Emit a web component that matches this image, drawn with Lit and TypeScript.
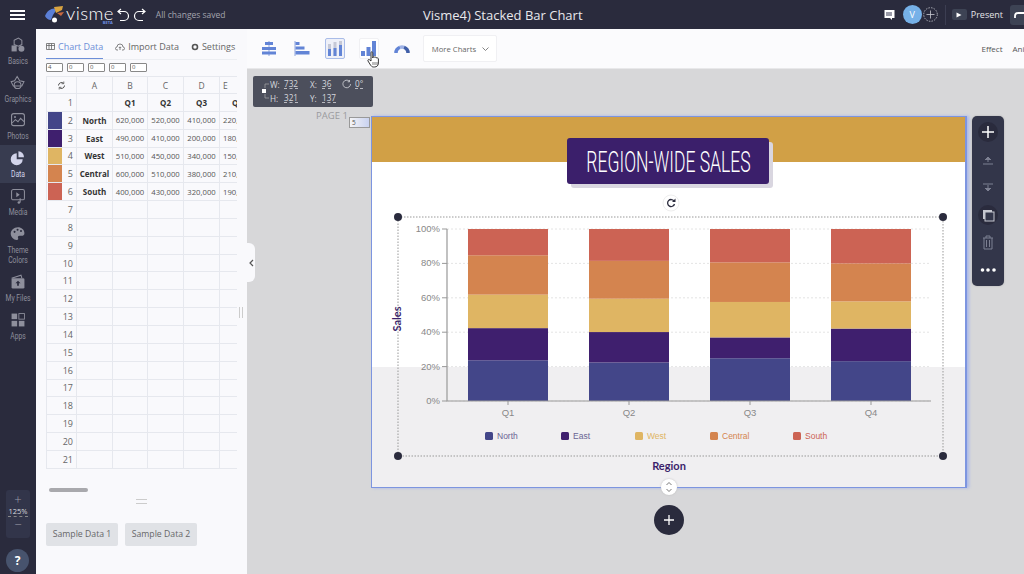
import { LitElement, html, svg, css } from 'lit';
import { customElement } from 'lit/decorators.js';

const SERIES = [
  { name: 'North', color: '#434689', values: [620, 520, 410, 220] },
  { name: 'East', color: '#3f1f6e', values: [490, 410, 200, 180] },
  { name: 'West', color: '#dfb563', values: [510, 450, 340, 150] },
  { name: 'Central', color: '#d4844f', values: [600, 510, 380, 210] },
  { name: 'South', color: '#cc6354', values: [400, 430, 320, 190] },
];
const QUARTERS = ['Q1', 'Q2', 'Q3', 'Q4'];
const ROW_COUNT = 21;

const railIcons: Record<string, unknown> = {
  Basics: svg`<path d="M6 5l5-2.5 4 2.500v5l-4 2-5-2z" fill="none" stroke="currentColor" stroke-width="1.2"/><path d="M3 11h6v7H3z" fill="currentColor"/><circle cx="14.5" cy="15" r="3.5" fill="currentColor"/>`,
  Graphics: svg`<path d="M9.5 3l3 5 5 1-2.5 5H5L2.500 9l4-1z" fill="none" stroke="currentColor" stroke-width="1.2"/><circle cx="10" cy="13" r="4" fill="none" stroke="currentColor" stroke-width="1.2"/>`,
  Photos: svg`<rect x="3" y="3" width="15" height="14" rx="2.500" fill="none" stroke="currentColor" stroke-width="1.3"/><path d="M3.500 14l4-4 3 2.500 3-4 4 4" fill="none" stroke="currentColor" stroke-width="1.2"/><circle cx="7" cy="7" r="1.200" fill="currentColor"/>`,
  Data: svg`<path d="M9 5a7 7 0 1 0 7 7H9z" fill="currentColor"/><path d="M11 2.500a7 7 0 0 1 6.500 7H11z" fill="currentColor"/>`,
  Media: svg`<rect x="3" y="3" width="15" height="12" rx="2" fill="none" stroke="currentColor" stroke-width="1.2"/><path d="M8.500 6l4 3-4 3z" fill="currentColor"/><path d="M13 13v5" stroke="currentColor" stroke-width="1.300"/><circle cx="11.500" cy="18" r="1.500" fill="currentColor"/>`,
  'Theme Colors': svg`<path d="M10.500 2.500c-5 0-8.500 3.500-8.500 7.500s3.500 7.500 7 7.500c2 0 2-1.500 1.500-2.500s0-2.500 2-2.500h2c2 0 3.500-1 3.500-3 0-4-3.500-7-7.500-7z" fill="currentColor"/><circle cx="6.500" cy="8" r="1.200" fill="#2a2b3d"/><circle cx="10" cy="5.500" r="1.200" fill="#2a2b3d"/><circle cx="14" cy="7" r="1.200" fill="#2a2b3d"/>`,
  'My Files': svg`<path d="M3 6l11-3.500 1 3.500" fill="none" stroke="currentColor" stroke-width="1.200"/><rect x="3" y="6" width="15" height="12" rx="1.500" fill="currentColor"/><path d="M10.500 9l3 3h-2v3h-2v-3h-2z" fill="#2a2b3d"/>`,
  Apps: svg`<rect x="3" y="3" width="6.500" height="6.500" fill="currentColor"/><rect x="11.500" y="3" width="6.500" height="6.500" fill="none" stroke="currentColor"/><rect x="3" y="11.500" width="6.500" height="6.500" fill="currentColor"/><rect x="11.500" y="11.500" width="6.500" height="6.500" fill="currentColor"/>`,
};
const RAIL_ITEMS = ['Basics', 'Graphics', 'Photos', 'Data', 'Media', 'Theme Colors', 'My Files', 'Apps'];

@customElement('app-root')
export class AppRoot extends LitElement {
  static styles = css`
    :host {
      display: block;
      width: 1024px;
      height: 574px;
      overflow: hidden;
      font-family: 'Open Sans', 'Noto Sans', sans-serif;
      color: #444;
    }
    .topbar {
      height: 29px;
      background: #2a2b3d;
      color: #fff;
      display: flex;
      align-items: center;
      overflow: hidden;
    }
    .top-left {
      flex: none;
      width: 423px;
      display: flex;
      align-items: center;
    }
    .burger {
      margin-left: 10px;
      width: 15px;
      height: 10px;
      border-top: 2px solid #fff;
      border-bottom: 2px solid #fff;
      box-sizing: border-box;
      position: relative;
    }
    .burger::after {
      content: '';
      position: absolute;
      left: 0;
      right: 0;
      top: 2px;
      height: 2px;
      background: #fff;
    }
    .logo {
      margin-left: 20px;
      display: flex;
      align-items: center;
      position: relative;
    }
    .logo-word {
      font-family: 'Lato', sans-serif;
      font-weight: 300;
      font-size: 18.5px;
      line-height: 14px;
      letter-spacing: 0.4px;
      margin-left: 1px;
      margin-bottom: 4px;
    }
    .beta {
      position: absolute;
      right: 1px;
      top: 14px;
      font-size: 4px;
      font-weight: 700;
      color: #6f8fe0;
      line-height: 5px;
    }
    .history {
      margin-left: 2px;
      display: flex;
      gap: 1px;
    }
    .saved {
      margin-left: 9px;
      font-size: 8.5px;
      color: #a3a4ae;
    }
    .doc-title {
      font-size: 13px;
      color: #e8e8ec;
      white-space: nowrap;
    }
    .top-right {
      margin-left: auto;
      display: flex;
      align-items: center;
      flex: none;
    }
    .avatar {
      margin-left: 8px;
      width: 19px;
      height: 19px;
      border-radius: 50%;
      background: #76b1e8;
      font-size: 9px;
      display: flex;
      align-items: center;
      justify-content: center;
    }
    .invite {
      margin-left: 1px;
    }
    .sep {
      width: 1px;
      height: 20px;
      background: #3c3e52;
      margin-left: 7px;
    }
    .present-box {
      margin-left: 6px;
      width: 15px;
      height: 11px;
      background: #3d4354;
      border-radius: 2px;
      display: flex;
      align-items: center;
      justify-content: center;
    }
    .present-label {
      margin-left: 4px;
      font-size: 9px;
      color: #e4e4e8;
    }
    .share {
      margin-left: 7px;
      width: 14px;
      height: 20px;
      background: #3d4354;
      border-radius: 3px 0 0 3px;
      display: flex;
      align-items: center;
      justify-content: flex-end;
    }
    .body {
      display: flex;
      height: 545px;
    }
    .rail {
      flex: none;
      width: 36px;
      background: #2a2b3d;
      color: #8e8f9c;
      display: flex;
      flex-direction: column;
      align-items: stretch;
      padding-top: 3px;
      box-sizing: border-box;
    }
    .rail-item {
      height: 37.7px;
      display: flex;
      flex-direction: column;
      align-items: center;
      justify-content: center;
      font-family: 'Roboto', sans-serif;
      font-size: 8.5px;
      line-height: 10px;
      text-align: center;
    }
    .rail-item span {
      display: block;
      width: 44px;
      transform: scaleX(0.8);
    }
    .rail-item.active {
      background: #383c50;
      color: #d2d4ea;
    }
    .rail-item.tall {
      height: 49px;
    }
    .rail-item svg {
      margin-bottom: 2px;
      flex: none;
    }
    .zoom {
      margin: auto 0 0 6px;
      padding-top: 2px;
      width: 24px;
      height: 48px;
      box-sizing: border-box;
      background: #32354a;
      border-radius: 3px;
      color: #9a9ba8;
      display: flex;
      flex-direction: column;
      align-items: center;
      font-size: 7.5px;
    }
    .zoom-sign {
      font-size: 13px;
      line-height: 15px;
      font-weight: 300;
    }
    .zoom-pct {
      color: #d8d8de;
      line-height: 9px;
      border-bottom: 1px dashed #888;
    }
    .help {
      margin: 11px 0 2px 6px;
      width: 23px;
      height: 23px;
      flex: none;
      border-radius: 50%;
      background: #47536d;
      color: #fff;
      font-weight: 700;
      font-size: 12px;
      display: flex;
      align-items: center;
      justify-content: center;
    }
    .panel {
      flex: none;
      width: 211px;
      box-sizing: border-box;
      background: #f9f9fc;
      padding-left: 10px;
      position: relative;
    }
    .tabs {
      height: 31px;
      width: 191px;
      display: flex;
      align-items: flex-end;
      gap: 12px;
      border-bottom: 1px solid #eceef2;
      box-sizing: border-box;
      font-size: 9px;
      white-space: nowrap;
      color: #666;
    }
    .tab {
      display: flex;
      align-items: center;
      gap: 3px;
      height: 25px;
      box-sizing: border-box;
      flex: none;
    }
    .tab.active {
      color: #6d8fd8;
      border-bottom: 1px solid #6d8fd8;
    }
    .tab svg {
      flex: none;
    }
    .mini-inputs {
      display: flex;
      gap: 4px;
      margin-top: 3px;
      height: 10px;
    }
    .mini-inputs span {
      width: 17px;
      height: 9px;
      box-sizing: border-box;
      border: 1px solid #888;
      border-radius: 1px;
      background: #fff;
      font-size: 6px;
      line-height: 7px;
      padding-left: 1px;
      color: #555;
    }
    .sheet {
      margin-top: 3px;
      width: 191px;
      overflow: hidden;
    }
    .grid {
      width: 209px;
      display: grid;
      grid-template-columns: 30px 36px 35px 36px 36px 36px;
      grid-template-rows: 17px;
      grid-auto-rows: 17.85px;
      border-top: 1px solid #e6e8ee;
      border-left: 1px solid #e6e8ee;
      box-sizing: border-box;
    }
    .cell {
      border-right: 1px solid #e6e8ee;
      border-bottom: 1px solid #e6e8ee;
      box-sizing: border-box;
      display: flex;
      align-items: center;
      justify-content: center;
      font-size: 7.7px;
      color: #555;
      white-space: nowrap;
      overflow: hidden;
    }
    .cell.bold {
      font-weight: 700;
      color: #333;
      font-size: 8px;
    }
    .cell.head {
      font-size: 8.5px;
      color: #666;
    }
    .cell.num {
      justify-content: flex-end;
      padding-right: 3px;
      font-size: 9px;
      color: #666;
    }
    .cell.clip {
      justify-content: flex-start;
      padding-left: 3px;
    }
    .swatch {
      width: 14px;
      height: 100%;
      margin-right: auto;
      margin-left: 1px;
    }
    .scroll-thumb {
      margin: 19px 0 0 3px;
      width: 39px;
      height: 4px;
      border-radius: 2px;
      background: #a9a9ad;
    }
    .grip {
      margin: 7px 0 0 90px;
      width: 11px;
      height: 5px;
      border-top: 1px solid #ccc;
      border-bottom: 1px solid #ccc;
      box-sizing: border-box;
    }
    .samples {
      margin-top: 19px;
      display: flex;
      gap: 7px;
    }
    .sample {
      width: 72px;
      height: 23px;
      background: #e0e2e6;
      border-radius: 2px;
      display: flex;
      align-items: center;
      justify-content: center;
      font-size: 8.7px;
      color: #666;
    }
    .vgrip {
      position: absolute;
      left: 203px;
      top: 278px;
      width: 4px;
      height: 11px;
      border-left: 1px solid #ccc;
      border-right: 1px solid #ccc;
      box-sizing: border-box;
    }
    .main {
      flex: 1;
      min-width: 0;
      display: flex;
      flex-direction: column;
    }
    .toolbar {
      height: 40px;
      flex: none;
      background: #fbfbfd;
      display: flex;
      align-items: center;
      padding-left: 5px;
      position: relative;
      overflow: hidden;
      border-bottom: 1px solid #e8e8ea;
      box-sizing: border-box;
    }
    .tool {
      flex: none;
      width: 33.3px;
      height: 27px;
      display: flex;
      align-items: center;
      justify-content: center;
    }
    .tool-box {
      width: 20px;
      height: 21px;
      box-sizing: border-box;
      border-radius: 2px;
      display: flex;
      align-items: center;
      justify-content: center;
    }
    .tool-box.on {
      border: 1px solid #a9bce8;
      background: #eef0f8;
    }
    .tool-box.hover {
      border: 1px solid #f0f0f3;
      background: #fff;
    }
    .more {
      flex: none;
      margin-left: 5px;
      width: 74px;
      height: 27px;
      box-sizing: border-box;
      border: 1px solid #f0f0f3;
      border-radius: 2px;
      background: #fff;
      display: flex;
      align-items: center;
      justify-content: center;
      gap: 6px;
      font-size: 7.7px;
      color: #666;
    }
    .tool-text {
      flex: none;
      font-size: 8px;
      color: #555;
      margin-left: 10px;
      white-space: nowrap;
    }
    .tool-text.first {
      margin-left: 484px;
    }
    .cursor {
      position: absolute;
      left: 120px;
      top: 22px;
    }
    .canvas {
      flex: 1;
      background: #d7d7d9;
      position: relative;
      overflow: hidden;
    }
    .collapse {
      position: absolute;
      left: 0;
      top: 174px;
      width: 8px;
      height: 39px;
      background: #f9f9fc;
      border-radius: 0 6px 6px 0;
      display: flex;
      align-items: center;
      justify-content: center;
    }
    .info {
      position: absolute;
      left: 6px;
      top: 7px;
      width: 120px;
      height: 31px;
      box-sizing: border-box;
      background: #4c4f5c;
      border-radius: 2px;
      color: #d6d7dc;
      font-size: 8.2px;
      display: grid;
      grid-template-columns: 9px 14px 26px 12px 20px 13px 1fr;
      grid-template-rows: 14px 14px;
      align-items: center;
      padding: 1px 0 0 8px;
    }
    .info u {
      text-decoration: none;
      border-bottom: 1px dashed #b8b9c0;
      line-height: 9px;
      justify-self: start;
    }
    .link {
      grid-row: 1 / 3;
    }
    .page-label {
      position: absolute;
      left: 69px;
      top: 40px;
      font-size: 9.5px;
      color: #9a9a9e;
    }
    .page-num {
      position: absolute;
      left: 102px;
      top: 48px;
      width: 21px;
      height: 11px;
      box-sizing: border-box;
      border: 1px solid #999;
      background: linear-gradient(90deg, #f4f4f6, #c9d2f0);
      font-size: 6.5px;
      line-height: 9px;
      padding-left: 2px;
      color: #555;
    }
    .page {
      position: absolute;
      left: 124px;
      top: 47px;
      width: 596px;
      height: 372px;
      box-sizing: border-box;
      border: 1px solid #7d95e0;
      border-right-width: 2px;
      background: #fff;
      box-shadow: 2px 0 3px #a9b8ea;
    }
    .page-band {
      height: 45px;
      background: #d1a046;
    }
    .page-shade {
      position: absolute;
      left: 0;
      right: 0;
      bottom: 0;
      height: 120px;
      background: #f0eff1;
    }
    .title-box {
      position: absolute;
      left: 195px;
      top: 21px;
      width: 202px;
      height: 46px;
      background: #3b1f6b;
      border-radius: 3px;
      box-shadow: 4px 4px 0 #d9d6e0;
      color: #fff;
      display: flex;
      align-items: center;
      justify-content: center;
    }
    .title-text {
      font-family: 'Roboto', sans-serif;
      font-weight: 300;
      font-size: 30px;
      white-space: nowrap;
      transform: scaleX(0.585);
    }
    .chart {
      position: absolute;
      left: 1px;
      top: 1px;
      display: block;
    }
    .side-tools {
      position: absolute;
      left: 725px;
      top: 47px;
      width: 32px;
      height: 170px;
      background: #33364a;
      border-radius: 5px;
      display: flex;
      flex-direction: column;
      align-items: center;
      padding-top: 5px;
      box-sizing: border-box;
      box-shadow: 0 0 2px #aaa;
    }
    .side-tools svg {
      height: 27px;
      flex: none;
    }
    .dots {
      margin-top: 1px;
    }
    .add {
      position: absolute;
      left: 407px;
      top: 436px;
      width: 30px;
      height: 30px;
      border-radius: 50%;
      background: #2a2b3d;
      display: flex;
      align-items: center;
      justify-content: center;
    }
    .resize {
      position: absolute;
      left: 414px;
      top: 410px;
      width: 16px;
      height: 16px;
      border-radius: 50%;
      background: #fff;
      box-shadow: 0 0 2px #bbb;
      display: flex;
      align-items: center;
      justify-content: center;
    }
  `;

  private renderTopbar() {
    return html`
      <header class="topbar">
        <div class="top-left">
          <div class="burger"></div>
          <div class="logo">
            <svg width="20" height="18" viewBox="0 0 20 18">
              <path d="M0 10C2 4 8 1 12 3l-4 6-2 5C3 14 1 12 0 10z" fill="#5b7fd6"/>
              <path d="M9 1l9-1-1 4-6 3z" fill="#d9a441"/>
              <path d="M12 7l7-1-3 4z" fill="#c9683f"/>
              <circle cx="9.500" cy="14" r="2.500" fill="#fff"/>
            </svg>
            <span class="logo-word">visme</span>
            <span class="beta">BETA</span>
          </div>
          <div class="history">
            <svg width="15" height="14" viewBox="0 0 15 14" fill="none" stroke="#fff" stroke-width="1.2">
              <path d="M5 1L2 3.500 5 6"/><path d="M2 3.500h6a4 4 0 0 1 0 9H4"/>
            </svg>
            <svg width="15" height="14" viewBox="0 0 15 14" fill="none" stroke="#fff" stroke-width="1.2">
              <path d="M10 1l3 2.500L10 6"/><path d="M13 3.500H7a4 4 0 0 0 0 9h4"/>
            </svg>
          </div>
          <span class="saved">All changes saved</span>
        </div>
        <div class="doc-title">Visme4) Stacked Bar Chart</div>
        <div class="top-right">
          <svg width="11" height="11" viewBox="0 0 11 11">
            <path d="M0.500 1h10v8H8v2L6 9H0.500z" fill="#fff"/><path d="M2 3h6v4H2z" fill="#9a9ba8"/>
          </svg>
          <div class="avatar">V</div>
          <svg class="invite" width="15" height="15" viewBox="0 0 15 15" fill="none" stroke="#c9cad2">
            <circle cx="7.500" cy="7.500" r="6.800" stroke-dasharray="1.500 1.200" stroke-width="0.800"/>
            <path d="M7.500 3.500v8M3.500 7.500h8" stroke-width="0.800"/>
          </svg>
          <div class="sep"></div>
          <div class="present-box">
            <svg width="6" height="6" viewBox="0 0 6 6"><path d="M0.500 0.500L5.500 3l-5 2.500z" fill="#fff"/></svg>
          </div>
          <span class="present-label">Present</span>
          <div class="share">
            <svg width="10" height="9" viewBox="0 0 10 9" fill="none" stroke="#fff" stroke-width="1.800">
              <path d="M1 8V6a3 3 0 0 1 3-3h6"/>
            </svg>
          </div>
        </div>
      </header>
    `;
  }

  private renderRail() {
    return html`
      <nav class="rail">
        ${RAIL_ITEMS.map((name) => html`
          <div class="rail-item ${name === 'Data' ? 'active' : ''} ${name === 'Theme Colors' ? 'tall' : ''}">
            <svg width="18" height="18" viewBox="0 0 21 21">${railIcons[name]}</svg>
            <span>${name}</span>
          </div>
        `)}
        <div class="zoom">
          <span class="zoom-sign">+</span>
          <span class="zoom-pct">125%</span>
          <span class="zoom-sign">−</span>
        </div>
        <div class="help">?</div>
      </nav>
    `;
  }

  private renderSheet() {
    const fmt = (v: number) => `${v},000`;
    const letters = ['A', 'B', 'C', 'D', 'E'];
    return html`
      <div class="sheet">
        <div class="grid">
          <div class="cell head">
            <svg width="9" height="9" viewBox="0 0 9 9" fill="none" stroke="#555">
              <path d="M1.500 4.500a3 3 0 0 1 5-2.200M7.500 4.500a3 3 0 0 1-5 2.200"/>
              <path d="M6.800 0.500v2.200H4.600M2.200 8.500V6.300h2.200" stroke-width="0.800"/>
            </svg>
          </div>
          ${letters.map((l, i) => html`<div class="cell head ${i === 4 ? 'clip' : ''}">${l}</div>`)}
          <div class="cell num">1</div>
          <div class="cell"></div>
          ${QUARTERS.map((q) => html`<div class="cell bold">${q}</div>`)}
          ${SERIES.map((s, i) => html`
            <div class="cell num">
              <span class="swatch" style="background:${s.color}"></span>${i + 2}
            </div>
            <div class="cell bold">${s.name}</div>
            ${s.values.map((v, j) => html`<div class="cell ${j === 3 ? 'clip' : ''}">${fmt(v)}</div>`)}
          `)}
          ${Array.from({ length: ROW_COUNT - 6 }, (_, i) => html`
            <div class="cell num">${i + 7}</div>
            <div class="cell"></div><div class="cell"></div><div class="cell"></div><div class="cell"></div><div class="cell"></div>
          `)}
        </div>
      </div>
    `;
  }

  private renderPanel() {
    return html`
      <aside class="panel">
        <div class="tabs">
          <div class="tab active">
            <svg width="9" height="7" viewBox="0 0 9 7" fill="none" stroke="#666" stroke-width="0.800">
              <path d="M0.500 0.500h8v6h-8zM3 0.500v6M5.500 0.500v6M0.500 2.500h8"/>
            </svg>
            Chart Data
          </div>
          <div class="tab">
            <svg width="10" height="8" viewBox="0 0 10 8" fill="none" stroke="#666" stroke-width="0.800">
              <path d="M3 7H2a1.500 1.500 0 0 1 0-3 3 3 0 0 1 6 0 1.500 1.500 0 0 1 0 3H7M5 7V4M3.800 5L5 3.800 6.200 5"/>
            </svg>
            Import Data
          </div>
          <div class="tab">
            <svg width="8" height="8" viewBox="0 0 8 8"><circle cx="4" cy="4" r="2.500" fill="none" stroke="#555" stroke-width="1.600"/></svg>
            Settings
          </div>
        </div>
        <div class="mini-inputs">
          <span>4</span><span>0</span><span>0</span><span>0</span><span>0</span>
        </div>
        ${this.renderSheet()}
        <div class="scroll-thumb"></div>
        <div class="grip"></div>
        <div class="samples">
          <div class="sample">Sample Data 1</div>
          <div class="sample">Sample Data 2</div>
        </div>
        <div class="vgrip"></div>
      </aside>
    `;
  }

  private renderToolbar() {
    const blue = '#6284d6';
    return html`
      <div class="toolbar">
        <div class="tool">
          <svg width="16" height="15" viewBox="0 0 16 15">
            <rect x="7.500" y="0" width="1" height="15" fill="#8fa5e0"/>
            <rect x="4" y="1" width="8" height="3" fill="${blue}"/>
            <rect x="1" y="6" width="14" height="3" fill="${blue}"/>
            <rect x="1" y="10.500" width="14" height="3" fill="${blue}"/>
          </svg>
        </div>
        <div class="tool">
          <svg width="16" height="15" viewBox="0 0 16 15">
            <rect x="0.500" y="0" width="1" height="15" fill="#8fa5e0"/>
            <rect x="1.500" y="1" width="4" height="3" fill="${blue}"/>
            <rect x="1.500" y="5.500" width="9" height="3" fill="${blue}"/>
            <rect x="1.500" y="10" width="14" height="3.500" fill="${blue}"/>
          </svg>
        </div>
        <div class="tool">
          <div class="tool-box on">
            <svg width="14" height="15" viewBox="0 0 14 15">
              <rect x="0" y="3" width="3" height="12" fill="#c5c8d6"/>
              <rect x="0" y="8" width="3" height="7" fill="${blue}"/>
              <rect x="5.500" y="1" width="3" height="14" fill="#c5c8d6"/>
              <rect x="5.500" y="7" width="3" height="8" fill="${blue}"/>
              <rect x="11" y="0" width="3" height="15" fill="#c5c8d6"/>
              <rect x="11" y="4" width="3" height="11" fill="${blue}"/>
            </svg>
          </div>
        </div>
        <div class="tool">
          <div class="tool-box hover">
            <svg width="15" height="15" viewBox="0 0 15 15">
              <rect x="0" y="10" width="4" height="5" fill="${blue}"/>
              <rect x="5.500" y="6" width="4" height="9" fill="${blue}"/>
              <rect x="11" y="0" width="4" height="15" fill="${blue}"/>
            </svg>
          </div>
        </div>
        <div class="tool">
          <svg width="16" height="9" viewBox="0 0 16 9" fill="none" stroke-width="3.500">
            <path d="M2 9a6 6 0 0 1 4-5.700" stroke="${blue}"/>
            <path d="M6 3.300a6 6 0 0 1 4 0" stroke="#9db1e6"/>
            <path d="M10 3.300a6 6 0 0 1 4 5.700" stroke="#3f5ea8"/>
          </svg>
        </div>
        <div class="more">
          More Charts
          <svg width="7" height="4" viewBox="0 0 7 4" fill="none" stroke="#666" stroke-width="0.800"><path d="M0.500 0.500l3 3 3-3"/></svg>
        </div>
        <span class="tool-text first">Effect</span>
        <span class="tool-text">Animation</span>
        <svg class="cursor" width="14" height="17" viewBox="0 0 14 17">
          <path d="M4 1.200c.8-.8 1.800-.3 1.800.8v5l.2-1c.8-.6 1.600-.3 1.800.4.800-.5 1.700-.2 1.800.6.800-.3 1.800.1 1.800 1V12c0 2.500-1.500 4-4 4H6.500C5 16 4.200 15 3.500 14L1 10c-.5-1 .6-2 1.600-1.200L4 10z" fill="#fff" stroke="#222" stroke-width="0.900"/>
          <path d="M6 11v3M8 11v3M10 11v3" stroke="#222" stroke-width="0.600"/>
        </svg>
      </div>
    `;
  }

  private renderChart() {
    // coordinates below are page relative, bars are 100% stacked from the sheet data
    const top = 111;
    const base = 283;
    const h = base - top;
    const barX = [95, 216, 337, 458];
    const bars = barX.flatMap((x, q) => {
      const total = SERIES.reduce((sum, s) => sum + s.values[q], 0);
      let y = base;
      return SERIES.map((s) => {
        const bh = (s.values[q] / total) * h;
        y -= bh;
        return svg`<rect x=${x} y=${y} width="80" height=${bh} fill=${s.color}/>`;
      });
    });
    const ticks = [0, 20, 40, 60, 80, 100];
    const legendX = [112, 188, 262, 337, 420];
    const corners = [[25, 99], [570, 99], [25, 338], [570, 338]];
    const dot = 'stroke:#999;stroke-width:1;stroke-dasharray:1.500 1.500';
    return svg`
      <svg class="chart" width="594" height="370" viewBox="0 0 594 370">
        ${ticks.map((t) => {
          const y = base - (t / 100) * h;
          return svg`
            <path d="M74 ${y}H558" stroke="#ddd" stroke-width="0.800" stroke-dasharray="2 2"/>
            <path d="M69 ${y}H74" stroke="#999"/>
            <text x="67" y=${y + 3} text-anchor="end" font-size="9.500" fill="#888" font-family="Liberation Sans, sans-serif">${t}%</text>
          `;
        })}
        ${bars}
        <path d="M74 ${top}V${base}H558" fill="none" stroke="#999" stroke-width="1.200"/>
        ${barX.map((x, i) => svg`
          <path d="M${x + 40} ${base}v4" stroke="#999"/>
          <text x=${x + 40} y="298" text-anchor="middle" font-size="9.500" fill="#888" font-family="Liberation Sans, sans-serif">${QUARTERS[i]}</text>
        `)}
        ${SERIES.map((s, i) => svg`
          <rect x=${legendX[i]} y="314" width="8" height="8" rx="1.500" fill=${s.color}/>
          <text x=${legendX[i] + 12} y="321" font-size="8.500" fill=${i < 2 ? '#6a6494' : s.color} font-family="Liberation Sans, sans-serif">${s.name}</text>
        `)}
        <text transform="translate(28 201) rotate(-90)" text-anchor="middle" font-size="11" font-weight="700" fill="#3b1f6b" font-family="Lato, sans-serif">Sales</text>
        <text x="296" y="352" text-anchor="middle" font-size="11" font-weight="700" fill="#3b1f6b" font-family="Lato, sans-serif">Region</text>
        <rect x="25" y="99" width="545" height="239" fill="none" style=${dot}/>
        ${corners.map(([x, y]) => svg`<circle cx=${x} cy=${y} r="4" fill="#2a2b3d"/>`)}
        <circle cx="298" cy="85" r="8" fill="#fff" stroke="#eee"/>
        <path d="M301 83a3.500 3.500 0 1 0 .5 3" fill="none" stroke="#2a2b3d" stroke-width="1.300"/>
        <path d="M302.500 80.500v3.500H299z" fill="#2a2b3d"/>
      </svg>
    `;
  }

  private renderSideTools() {
    const dim = '#7d8092';
    return html`
      <div class="side-tools">
        <svg width="28" viewBox="0 0 28 27"><circle cx="14" cy="11" r="10" fill="#2a2b3d"/><path d="M14 5v12M8 11h12" stroke="#fff" stroke-width="1.500"/></svg>
        <svg width="28" viewBox="0 0 28 27" fill="none" stroke=${dim}><path d="M9 16h10M14 14v-5"/><path d="M11 12l3-3 3 3" fill=${dim}/></svg>
        <svg width="28" viewBox="0 0 28 27" fill="none" stroke=${dim}><path d="M9 9h10M14 10v6"/><path d="M11 13l3 3 3-3" fill=${dim}/></svg>
        <svg width="28" viewBox="0 0 28 27"><circle cx="14" cy="13" r="10" fill="#2a2b3d"/><rect x="9" y="8" width="9" height="9" fill="#c5c7d0"/><rect x="11" y="10" width="9" height="9" fill="#33364a" stroke="#c5c7d0"/></svg>
        <svg width="28" viewBox="0 0 28 27" fill="none" stroke=${dim}><path d="M9 9h10M12 9V7h4v2M10 9v11h8V9M12.500 11v7M15.500 11v7"/></svg>
        <svg class="dots" width="28" viewBox="0 0 28 27"><circle cx="8.500" cy="13" r="1.800" fill="#fff"/><circle cx="14" cy="13" r="1.800" fill="#fff"/><circle cx="20" cy="13" r="1.800" fill="#fff"/></svg>
      </div>
    `;
  }

  private renderCanvas() {
    return html`
      <div class="canvas">
        <div class="info">
          <svg class="link" width="9" height="16" viewBox="0 0 9 16" fill="none" stroke="#aaa" stroke-width="0.700">
            <path d="M8 1H4v4M8 15H4v-4"/><rect x="1" y="6" width="4" height="4" fill="#fff" stroke="none"/>
          </svg>
          <span>W:</span><u>732</u><span>X:</span><u>36</u>
          <svg width="10" height="10" viewBox="0 0 10 10" fill="none" stroke="#d6d7dc" stroke-width="0.800"><path d="M8.500 5a3.800 3.800 0 1 1-1.200-2.800M7.500 1v1.800H5.700"/></svg>
          <u>0°</u>
          <span>H:</span><u>321</u><span>Y:</span><u>137</u>
        </div>
        <span class="page-label">PAGE 1</span>
        <span class="page-num">5</span>
        <div class="page">
          <div class="page-band"></div>
          <div class="page-shade"></div>
          <div class="title-box"><span class="title-text">REGION-WIDE SALES</span></div>
          ${this.renderChart()}
        </div>
        ${this.renderSideTools()}
        <div class="resize">
          <svg width="8" height="12" viewBox="0 0 8 12" fill="none" stroke="#555" stroke-width="0.800"><path d="M1.500 4L4 1.500 6.500 4M1.500 8L4 10.500 6.500 8"/></svg>
        </div>
        <div class="add">
          <svg width="12" height="12" viewBox="0 0 12 12"><path d="M6 1v10M1 6h10" stroke="#fff" stroke-width="1.300"/></svg>
        </div>
        <div class="collapse">
          <svg width="5" height="8" viewBox="0 0 5 8" fill="none" stroke="#555" stroke-width="1.200"><path d="M4 1L1 4l3 3"/></svg>
        </div>
      </div>
    `;
  }

  render() {
    return html`
      ${this.renderTopbar()}
      <div class="body">
        ${this.renderRail()}
        ${this.renderPanel()}
        <main class="main">
          ${this.renderToolbar()}
          ${this.renderCanvas()}
        </main>
      </div>
    `;
  }
}
